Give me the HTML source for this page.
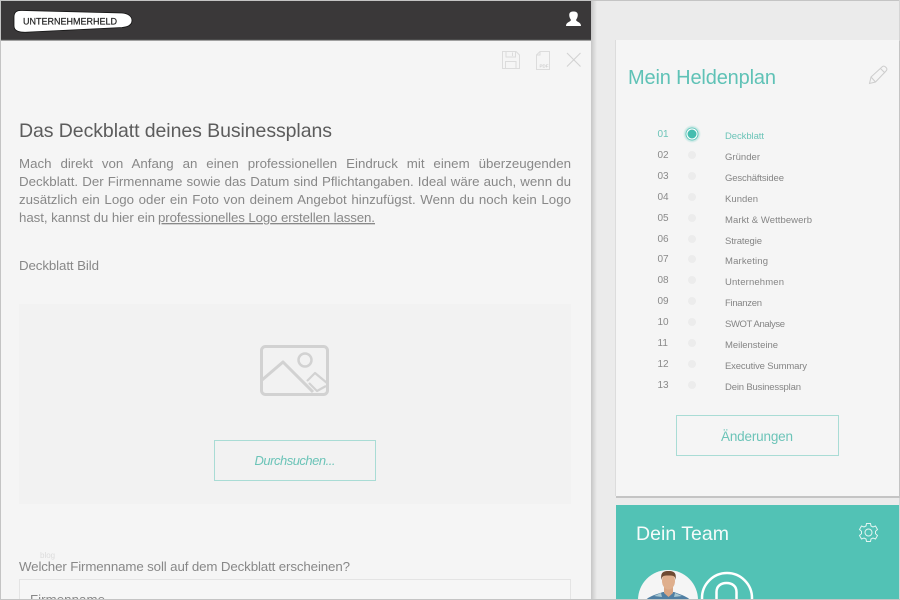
<!DOCTYPE html>
<html lang="de"><head><meta charset="utf-8"><title>Heldenplan</title>
<style>
html,body{margin:0;padding:0;width:900px;height:600px;overflow:hidden;background:#ebebeb}
svg{position:absolute;left:0;top:0}
#w{position:absolute;left:0;top:0;width:900px;height:600px;filter:blur(.3px)}
text{font-family:"Liberation Sans",sans-serif}
.b{font-size:13.3px;fill:#888}
.n{font-size:10px;fill:#8a8a8a}
.l{font-size:9.5px;fill:#858585}
.d{fill:#ececec}
.j{position:absolute;left:19px;width:552px;height:18px;font:13.3px/18px "Liberation Sans",sans-serif;color:#888;text-align:justify;text-align-last:justify;white-space:nowrap}
</style></head><body><div id="w">
<svg width="900" height="600" viewBox="0 0 900 600" xmlns="http://www.w3.org/2000/svg">
<defs>
<linearGradient id="sh" x1="0" x2="1" y1="0" y2="0"><stop offset="0" stop-color="#c6c6c6"/><stop offset="1" stop-color="#ebebeb"/></linearGradient>
<radialGradient id="glow"><stop offset=".6" stop-color="#52c2b5" stop-opacity=".5"/><stop offset="1" stop-color="#52c2b5" stop-opacity="0"/></radialGradient>
<clipPath id="c1"><circle cx="668" cy="600" r="30"/></clipPath>
</defs>
<rect width="900" height="600" fill="#ebebeb"/>
<rect x="591" y="1" width="6" height="599" fill="url(#sh)"/>
<rect x="0" y="0" width="900" height="1" fill="#c4c4c4"/>
<rect x="0" y="0" width="1" height="600" fill="#c4c4c4"/>
<rect x="899" y="0" width="1" height="600" fill="#d5d5d5"/>
<rect x="1" y="1" width="590" height="599" fill="#f5f5f5"/>
<rect x="1" y="1" width="590" height="39" fill="#3a3839"/>
<rect x="1" y="39" width="590" height="1.500" fill="#4a4a4a"/>
<path d="M14 17C14 12 17 10 22 10.500L122 13C129 13.500 132 17 132 20.500C132 25 128 27 122 27.500L30 32C19 33 14 31 14 26Z" fill="#fff" stroke="#111" stroke-width=".8"/>
<text x="23" y="24.500" font-size="9" fill="#222" stroke="#222" stroke-width=".2" textLength="94" lengthAdjust="spacing">UNTERNEHMERHELD</text>
<path d="M566 26C566 22 570.500 22 571 20C569.500 18 569 15.500 569.300 14C569.800 12 571.500 11.500 573.500 11.500C575.500 11.500 577.200 12 577.700 14C578 15.500 577.500 18 576 20C576.500 22 581 22 581 26Z" fill="#fff"/>

<g fill="none" stroke="#dcdcdc" stroke-width="1">
<path d="M502.500 51.500H516L519.500 55V68.500H502.500Z"/><path d="M506 51.500V57H515.500V51.500M512.500 52.500V56M505.500 68V61.500H516V68"/>
<path d="M540 51.500H549.500V69.500H536.500V55Z"/><path d="M540 51.500V55H536.500"/>
</g>
<text x="539.500" y="67.500" font-size="4.500" fill="#cfcfcf" font-weight="bold">PDF</text>
<path d="M567 53L580.500 66.500M580.500 53L567 66.500" stroke="#d2d2d2" stroke-width="1.100" fill="none"/>

<text x="19" y="137" font-size="19.500" fill="#5c5c5c" textLength="313" lengthAdjust="spacing">Das Deckblatt deines Businessplans</text>
<text x="19" y="222" class="b" textLength="136" lengthAdjust="spacing">hast, kannst du hier ein</text>
<text x="158" y="222" class="b" textLength="217" lengthAdjust="spacing" text-decoration="underline">professionelles Logo erstellen lassen.</text>
<text x="19" y="270" class="b" textLength="80" lengthAdjust="spacing">Deckblatt Bild</text>

<rect x="19" y="304" width="552" height="200" fill="#f2f2f2"/>
<g fill="none" stroke="#d2d2d2" stroke-width="3" stroke-linejoin="round">
<rect x="261.500" y="346.500" width="66" height="48" rx="4"/>
<path d="M262 380L283 362L313 392"/>
<path d="M307 381L315 373L327 383M309 383L317 391L326 386" stroke-width="2.200"/>
<circle cx="305" cy="360" r="6.500" stroke-width="2.500"/>
</g>
<rect x="214.500" y="440.500" width="161" height="40" fill="none" stroke="#a9dcd5"/>
<text x="295" y="465" text-anchor="middle" font-size="13" font-style="italic" fill="#6cc4b8" textLength="81" lengthAdjust="spacing">Durchsuchen...</text>
<text x="40" y="558" font-size="8" fill="#dcdcdc">blog</text>
<text x="19" y="571" class="b" textLength="331" lengthAdjust="spacing">Welcher Firmenname soll auf dem Deckblatt erscheinen?</text>
<rect x="19.500" y="579.500" width="551" height="30" fill="#f6f6f6" stroke="#e4e4e4"/>
<text x="30" y="604" class="b" textLength="75" lengthAdjust="spacing">Firmenname</text>

<rect x="616" y="41" width="284" height="457" fill="#c4c4c4"/>
<rect x="615" y="40" width="1" height="456" fill="#dcdcdc"/>
<rect x="616" y="40" width="283" height="456" fill="#f5f5f5"/>
<text x="628" y="84" font-size="20" fill="#5fc2b6" textLength="148" lengthAdjust="spacing">Mein Heldenplan</text>
<g fill="none" stroke="#cdcdcd" stroke-width="1">
<path d="M869.500 83.500L871 77L882.500 66.500Q884 65.500 885.500 67L886.500 68Q887.500 69.500 886 71L875.500 82ZM871 77L875.500 82M880.500 68.500L885 73"/>
</g>

<circle cx="692" cy="134" r="9" fill="url(#glow)"/>
<circle cx="692" cy="134" r="6" fill="#fff" stroke="#52c2b5" stroke-width=".8"/>
<circle cx="692" cy="134" r="4.500" fill="#45bdaf"/>
<text x="657.500" y="137" class="n" style="fill:#6cc4b8">01</text>
<text x="725" y="139" class="l" style="fill:#6cc4b8" textLength="39" lengthAdjust="spacing">Deckblatt</text>

<text x="657.500" y="158" class="n">02</text><circle class="d" cx="692" cy="155" r="4"/><text x="725" y="160" class="l" textLength="35" lengthAdjust="spacing">Gründer</text>
<text x="657.500" y="179" class="n">03</text><circle class="d" cx="692" cy="176" r="4"/><text x="725" y="181" class="l" textLength="59" lengthAdjust="spacing">Geschäftsidee</text>
<text x="657.500" y="200" class="n">04</text><circle class="d" cx="692" cy="197" r="4"/><text x="725" y="202" class="l" textLength="33" lengthAdjust="spacing">Kunden</text>
<text x="657.500" y="221" class="n">05</text><circle class="d" cx="692" cy="218" r="4"/><text x="725" y="223" class="l" textLength="87" lengthAdjust="spacing">Markt &amp; Wettbewerb</text>
<text x="657.500" y="242" class="n">06</text><circle class="d" cx="692" cy="239" r="4"/><text x="725" y="244" class="l" textLength="37" lengthAdjust="spacing">Strategie</text>
<text x="657.500" y="262" class="n">07</text><circle class="d" cx="692" cy="259" r="4"/><text x="725" y="264" class="l" textLength="43" lengthAdjust="spacing">Marketing</text>
<text x="657.500" y="283" class="n">08</text><circle class="d" cx="692" cy="280" r="4"/><text x="725" y="285" class="l" textLength="59" lengthAdjust="spacing">Unternehmen</text>
<text x="657.500" y="304" class="n">09</text><circle class="d" cx="692" cy="301" r="4"/><text x="725" y="306" class="l" textLength="37" lengthAdjust="spacing">Finanzen</text>
<text x="657.500" y="325" class="n">10</text><circle class="d" cx="692" cy="322" r="4"/><text x="725" y="327" class="l" textLength="60" lengthAdjust="spacing">SWOT Analyse</text>
<text x="657.500" y="346" class="n">11</text><circle class="d" cx="692" cy="343" r="4"/><text x="725" y="348" class="l" textLength="53" lengthAdjust="spacing">Meilensteine</text>
<text x="657.500" y="367" class="n">12</text><circle class="d" cx="692" cy="364" r="4"/><text x="725" y="369" class="l" textLength="82" lengthAdjust="spacing">Executive Summary</text>
<text x="657.500" y="388" class="n">13</text><circle class="d" cx="692" cy="385" r="4"/><text x="725" y="390" class="l" textLength="76" lengthAdjust="spacing">Dein Businessplan</text>

<rect x="676.500" y="415.500" width="162" height="40" fill="none" stroke="#a9dcd5"/>
<text x="757" y="441" text-anchor="middle" font-size="13.500" fill="#6cc4b8" textLength="72" lengthAdjust="spacing">Änderungen</text>

<rect x="616" y="505" width="283" height="95" fill="#52c2b5"/>
<text x="636" y="540" font-size="19.500" fill="#f5fbfa" textLength="93" lengthAdjust="spacing">Dein Team</text>
<g fill="none" stroke="#e3f5f2" stroke-width="1">
<circle cx="868.500" cy="532.500" r="3.500"/>
<path d="M866.500 523.500H870.500L871 526L873 527L875.500 526L877.500 529.500L875.500 531.300V533.700L877.500 535.500L875.500 539L873 538L871 539L870.500 541.500H866.500L866 539L864 538L861.500 539L859.500 535.500L861.500 533.700V531.300L859.500 529.500L861.500 526L864 527L866 526Z"/>
</g>
<circle cx="668" cy="600" r="30" fill="#f5f5f5"/>
<g clip-path="url(#c1)">
<path d="M646 600C648 597 654 595 663 592H674C682 595 688 597 690 600Z" fill="#4f7fa3"/>
<path d="M654 596L661 593L662 597ZM682 596L675 593L674 597Z" fill="#a8c8d2"/>
<path d="M664 586H673V593L668.500 597L664 593Z" fill="#d8a583"/>
<ellipse cx="668.500" cy="581" rx="6.500" ry="8.500" fill="#dfaf8d"/>
<path d="M661.500 580C660 572 664 571 668.500 571C673 571 677 572 675.500 580C675 576 674 575.500 668.500 575.500C663 575.500 662 576 661.500 580Z" fill="#6e4a32"/>
</g>
<circle cx="727" cy="598" r="25" fill="none" stroke="#fff" stroke-width="2.500"/>
<path d="M716.500 600V592C716.500 586 721 583 726.500 583C732 583 736.500 586 736.500 592V600" fill="none" stroke="#fff" stroke-width="2.500"/>
<rect x="0" y="599" width="900" height="1" fill="#c4c4c4"/>
</svg>
<div class="j" style="top:155px">Mach direkt von Anfang an einen professionellen Eindruck mit einem überzeugenden</div>
<div class="j" style="top:173px">Deckblatt. Der Firmenname sowie das Datum sind Pflichtangaben. Ideal wäre auch, wenn du</div>
<div class="j" style="top:191px">zusätzlich ein Logo oder ein Foto von deinem Angebot hinzufügst. Wenn du noch kein Logo</div>
</div>
</body></html>
